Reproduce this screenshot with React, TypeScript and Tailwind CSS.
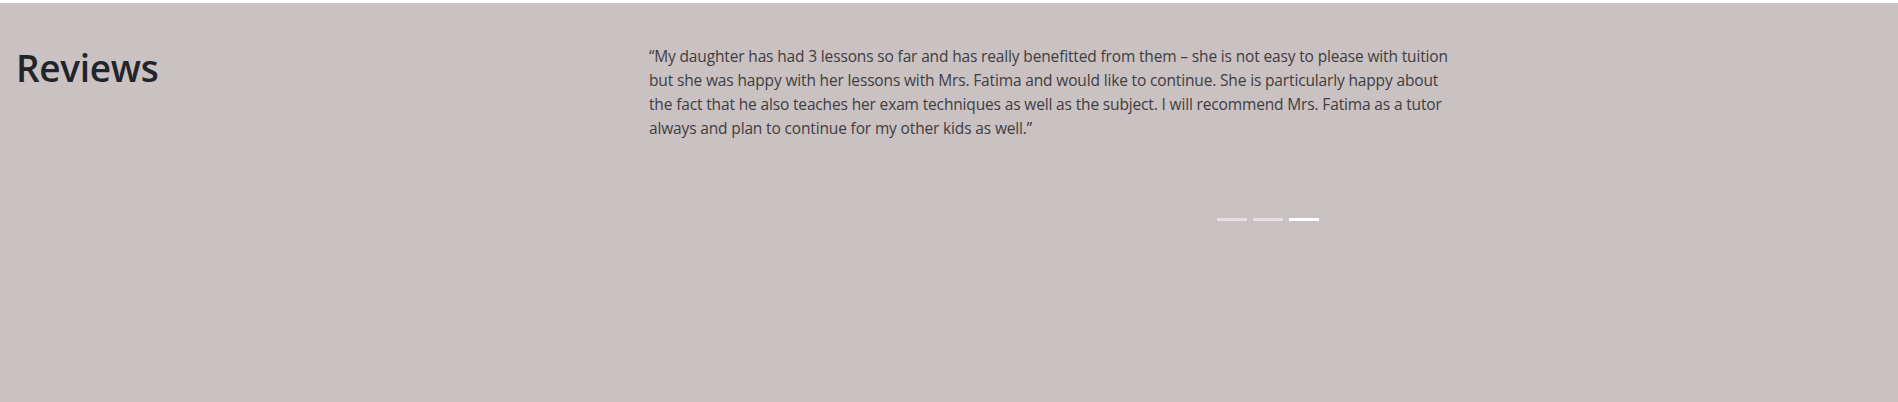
export default function App() {
  return (
    <div className="min-h-[402px] w-full border-t-[3px] border-white bg-[#c9c1c2] font-['Open_Sans',sans-serif]">
      <div className="flex pt-[41px]">
        <div className="w-[649px] shrink-0 pl-[16px] pt-[2px]">
          <h2 className="text-[37px] font-semibold leading-[1.2] tracking-[-0.3px] text-[#212529]">Reviews</h2>
        </div>
        <div className="flex flex-1 flex-col pr-[11px]">
          <p className="text-[15.5px] leading-[24px] tracking-[-0.15px] text-[#3f3d3e] whitespace-nowrap">
            “My daughter has had 3 lessons so far and has really benefitted from them – she is not easy to please with tuition
            <br />
            but she was happy with her lessons with Mrs. Fatima and would like to continue. She is particularly happy about
            <br />
            the fact that he also teaches her exam techniques as well as the subject. I will recommend Mrs. Fatima as a tutor
            <br />
            always and plan to continue for my other kids as well.”
          </p>
          <div className="mt-[78px] flex justify-center gap-[6px]">
            <span className="h-[3px] w-[30px] bg-white/50" />
            <span className="h-[3px] w-[30px] bg-white/50" />
            <span className="h-[3px] w-[30px] bg-white" />
          </div>
        </div>
      </div>
    </div>
  );
}
